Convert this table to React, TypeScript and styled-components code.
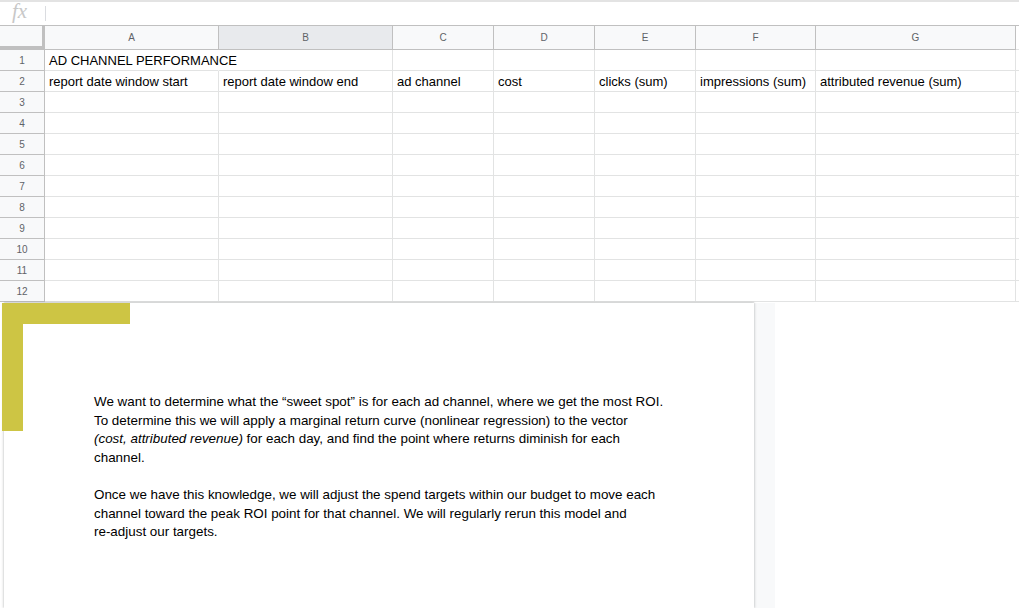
import styled, { createGlobalStyle } from "styled-components";

const columns = [
  { key: "A", width: 174 },
  { key: "B", width: 174, active: true },
  { key: "C", width: 101 },
  { key: "D", width: 101 },
  { key: "E", width: 101 },
  { key: "F", width: 120 },
  { key: "G", width: 200 },
];

const rows: string[][] = [
  ["AD CHANNEL PERFORMANCE", "", "", "", "", "", ""],
  [
    "report date window start",
    "report date window end",
    "ad channel",
    "cost",
    "clicks (sum)",
    "impressions (sum)",
    "attributed revenue (sum)",
  ],
  ...Array.from({ length: 10 }, () => ["", "", "", "", "", "", ""]),
];

function App() {
  return (
    <Page>
      <GlobalStyle />
      <FormulaBar>
        <Fx>fx</Fx>
        <FormulaInput />
      </FormulaBar>

      <Sheet>
        <Corner />
        {columns.map((col) => (
          <ColHeader key={col.key} $active={!!col.active}>
            {col.key}
          </ColHeader>
        ))}
        <Spare />
        {rows.map((row, i) => (
          <Row key={i}>
            <RowHeader>{i + 1}</RowHeader>
            {row.map((value, j) => (
              <Cell key={j} $overflow={i === 0 && j === 0}>
                {value}
              </Cell>
            ))}
            <Spare />
          </Row>
        ))}
      </Sheet>

      <DocArea>
        <DocPage>
          <Accent />
          <DocText>
            <p>
              We want to determine what the “sweet spot” is for each ad channel, where we get
              the most ROI.
              <br />
              To determine this we will apply a marginal return curve (nonlinear regression)
              to the vector
              <br />
              <em>(cost, attributed revenue)</em> for each day, and find the point where
              returns diminish for each
              <br />
              channel.
            </p>
            <p>
              Once we have this knowledge, we will adjust the spend targets within our budget
              to move each
              <br />
              channel toward the peak ROI point for that channel. We will regularly rerun this
              model and
              <br />
              re-adjust our targets.
            </p>
          </DocText>
        </DocPage>
        <DocGutter />
      </DocArea>
    </Page>
  );
}

export default App;

const GlobalStyle = createGlobalStyle`
  html, body {
    margin: 0;
    padding: 0;
    background: #ffffff;
    overflow: hidden;
  }
  body {
    font-family: Arial, "Liberation Sans", Helvetica, sans-serif;
    color: #000;
  }
`;

const Page = styled.div`
  width: 1019px;
  height: 608px;
  overflow: hidden;
  display: flex;
  flex-direction: column;
`;

const FormulaBar = styled.div`
  height: 25px;
  box-sizing: border-box;
  border-top: 2px solid #e3e3e3;
  display: flex;
  align-items: center;
`;

const Fx = styled.span`
  width: 45px;
  padding-left: 12px;
  box-sizing: border-box;
  font-family: "Liberation Serif", "DejaVu Serif", serif;
  font-style: italic;
  font-size: 21px;
  color: #c8c8c8;
  line-height: 1;
  margin-top: -4px;
`;

const FormulaInput = styled.div`
  height: 15px;
  border-left: 1px solid #dadce0;
  flex: 1;
`;

const Sheet = styled.div`
  display: grid;
  grid-template-columns: 45px ${columns.map((c) => `${c.width}px`).join(" ")} 1fr;
  grid-template-rows: 24px;
  grid-auto-rows: 21px;
  border-top: 1px solid #c0c0c0;
`;

const Row = styled.div`
  display: contents;
`;

const Corner = styled.div`
  background: #f8f9fa;
  box-sizing: border-box;
  border-right: 4px solid #c0c0c0;
  border-bottom: 4px solid #c0c0c0;
  margin-right: -1px;
`;

const ColHeader = styled.div<{ $active: boolean }>`
  background: ${(p) => (p.$active ? "#e8eaed" : "#f8f9fa")};
  box-sizing: border-box;
  border-right: 1px solid #c0c0c0;
  border-bottom: 1px solid #c0c0c0;
  font-size: 10px;
  color: #5f6368;
  display: flex;
  align-items: center;
  justify-content: center;
`;

const Spare = styled.div`
  border-bottom: 1px solid #e2e3e3;
`;

const RowHeader = styled.div`
  background: #f8f9fa;
  box-sizing: border-box;
  border-right: 1px solid #c0c0c0;
  border-bottom: 1px solid #c0c0c0;
  font-size: 10px;
  color: #5f6368;
  display: flex;
  align-items: center;
  justify-content: center;
`;

const Cell = styled.div<{ $overflow: boolean }>`
  box-sizing: border-box;
  border-right: 1px solid ${(p) => (p.$overflow ? "transparent" : "#e2e3e3")};
  border-bottom: 1px solid #e2e3e3;
  font-size: 13px;
  padding: 0 4px;
  display: flex;
  align-items: center;
  white-space: nowrap;
  overflow: ${(p) => (p.$overflow ? "visible" : "hidden")};
  position: relative;
  z-index: ${(p) => (p.$overflow ? 1 : 0)};
`;

const DocArea = styled.div`
  flex: 1;
  display: flex;
  padding-left: 4px;
  margin-top: 1px;
`;

const DocPage = styled.div`
  position: relative;
  width: 750px;
  background: #ffffff;
  box-shadow: -1px 0 2px rgba(60, 64, 67, 0.18), 1px 0 2px rgba(60, 64, 67, 0.18),
    0 -1px 1px rgba(60, 64, 67, 0.1);
  padding: 90px 0 0 90px;
  box-sizing: border-box;
`;

const Accent = styled.div`
  position: absolute;
  left: -2px;
  top: 0;
  width: 128px;
  height: 128px;
  &::before,
  &::after {
    content: "";
    position: absolute;
    left: 0;
    top: 0;
    background: #cdc544;
  }
  &::before {
    width: 128px;
    height: 21px;
  }
  &::after {
    width: 21px;
    height: 128px;
  }
`;

const DocText = styled.div`
  font-size: 13.4px;
  line-height: 18.6px;
  color: #000;
  white-space: nowrap;

  p {
    margin: 0 0 18.6px;
  }
`;

const DocGutter = styled.div`
  width: 21px;
  background: #f8f9fa;
`;
